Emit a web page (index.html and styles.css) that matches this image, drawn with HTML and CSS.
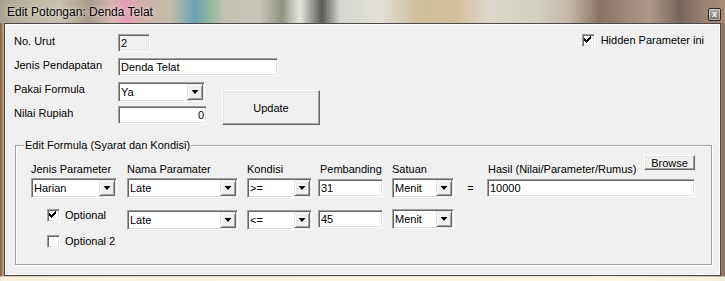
FILE: index.html
```html
<!DOCTYPE html>
<html lang="id">
<head>
    <meta charset="UTF-8">
    <title>Edit Potongan: Denda Telat</title>
    <link rel="stylesheet" href="styles.css">
</head>
<body>
    <div class="desktop">
        <div class="titlebar">
            <span class="title">Edit Potongan: Denda Telat</span>
            <span class="close">x</span>
        </div>

        <div class="client">
            <div class="top">
                <div class="form">
                    <div class="row">
                        <span class="lbl">No. Urut</span>
                        <div class="edit readonly w-urut">2</div>
                    </div>
                    <div class="row">
                        <span class="lbl">Jenis Pendapatan</span>
                        <div class="edit w-jenis">Denda Telat</div>
                    </div>
                    <div class="pair">
                        <div>
                            <div class="row">
                                <span class="lbl">Pakai Formula</span>
                                <div class="combo w-pakai"><span class="val">Ya</span><span class="arrow"></span></div>
                            </div>
                            <div class="row">
                                <span class="lbl">Nilai Rupiah</span>
                                <div class="edit num w-nilai">0</div>
                            </div>
                        </div>
                        <button class="btn update">Update</button>
                    </div>
                </div>

                <div class="check hidden-param">
                    <span class="box">
                        <svg width="11" height="11" viewBox="0 0 11 11" shape-rendering="crispEdges"><path d="M1 3h1v3H1zM2 4h1v3H2zM3 5h1v3H3zM4 4h1v3H4zM5 3h1v3H5zM6 2h1v3H6zM7 1h1v3H7z" fill="#000"/></svg>
                    </span>
                    Hidden Parameter ini
                </div>
            </div>

            <fieldset class="group">
                <legend>Edit Formula (Syarat dan Kondisi)</legend>
                <div class="formula">
                    <div class="frow hdr">
                        <span>Jenis Parameter</span>
                        <span>Nama Paramater</span>
                        <span>Kondisi</span>
                        <span>Pembanding</span>
                        <span>Satuan</span>
                        <span></span>
                        <div class="hasil">
                            <span>Hasil (Nilai/Parameter/Rumus)</span>
                            <button class="btn browse">Browse</button>
                        </div>
                    </div>

                    <div class="frow line1">
                        <div class="combo w-c1"><span class="val">Harian</span><span class="arrow"></span></div>
                        <div class="combo w-c2"><span class="val">Late</span><span class="arrow"></span></div>
                        <div class="combo w-c3"><span class="val">&gt;=</span><span class="arrow"></span></div>
                        <div class="edit w-c4 lift">31</div>
                        <div class="combo w-c5"><span class="val">Menit</span><span class="arrow"></span></div>
                        <span class="eq">=</span>
                        <div class="edit w-c7 lift">10000</div>
                    </div>

                    <div class="frow line2">
                        <div class="check opt">
                            <span class="box">
                                <svg width="11" height="11" viewBox="0 0 11 11" shape-rendering="crispEdges"><path d="M1 3h1v3H1zM2 4h1v3H2zM3 5h1v3H3zM4 4h1v3H4zM5 3h1v3H5zM6 2h1v3H6zM7 1h1v3H7z" fill="#000"/></svg>
                            </span>
                            Optional
                        </div>
                        <div class="combo w-c2"><span class="val">Late</span><span class="arrow"></span></div>
                        <div class="combo w-c3"><span class="val">&lt;=</span><span class="arrow"></span></div>
                        <div class="edit w-c4">45</div>
                        <div class="combo w-c5 up"><span class="val">Menit</span><span class="arrow"></span></div>
                    </div>

                    <div class="frow line3">
                        <div class="check opt">
                            <span class="box"></span>
                            Optional 2
                        </div>
                    </div>
                </div>
            </fieldset>
        </div>
    </div>
</body>
</html>
```

FILE: styles.css
```css
:root {
    --face: #f0f0f0;
    --light: #e3e3e3;
    --shadow: #a0a0a0;
    --dark: #696969;
}

* {
    margin: 0;
    padding: 0;
    box-sizing: border-box;
}

body {
    width: 725px;
    height: 281px;
    overflow: hidden;
    font-family: "Liberation Sans", Arial, sans-serif;
    font-size: 11px;
    color: #000;
}

/* blurred aero backdrop behind the window */
.desktop {
    height: 281px;
    background:
        linear-gradient(180deg, transparent 0, transparent 276px, rgba(255, 251, 230, 0.9) 277px),
        linear-gradient(90deg, #7d5c42 0, #b89878 3px, #c9b79c 20%, #d8ccb4 55%, #ead9c0 85%, #b49480 97%, #8a7060 100%);
}

.titlebar {
    height: 23px;
    display: flex;
    align-items: flex-start;
    padding: 5px 4px 0 7px;
    background: linear-gradient(90deg,
        #a9a28e 0, #bdb6a2 30px, #c7bfaa 60px, #a89c88 90px, #d6b4b2 112px, #e49cb4 125px, #cfb0a8 145px,
        #c4bca6 170px, #6aa4b4 195px, #8cb49c 208px, #c6c2b4 225px, #c8c6bc 260px, #8e9282 282px,
        #e6e6de 300px, #5a5a58 322px, #d6d6ce 340px, #e2e0d6 380px, #cfbc98 420px, #d4bf9c 455px,
        #ddd8cc 490px, #d2cec2 540px, #c4b8a4 570px, #8c7262 600px, #a08676 625px, #b09888 650px,
        #786458 680px, #9c8474 705px, #a88a76 725px);
}

.title {
    font-size: 12px;
    line-height: 15px;
    text-shadow: 0 0 6px rgba(255, 255, 255, 0.7), 0 0 2px rgba(255, 255, 255, 0.5);
}

.close {
    margin: 3px 0 0 auto;
    width: 13px;
    height: 13px;
    border: 1px solid #2a2a2a;
    border-radius: 2px;
    background: linear-gradient(180deg, #b0aaa4, #7a7470);
    box-shadow: inset 0 0 0 1px rgba(255, 255, 255, 0.45);
    color: #fff;
    font-size: 9px;
    font-weight: bold;
    line-height: 10px;
    text-align: center;
}

.client {
    margin-left: 4px;
    width: 717px;
    height: 253px;
    border: 1px solid #4a4a4a;
    box-shadow: inset 1px 1px 0 #fff, inset -1px -1px 0 #fff;
    background: var(--face);
    padding: 10px 16px 0 9px;
}

.top {
    display: flex;
    align-items: flex-start;
}

.row {
    display: flex;
    align-items: flex-start;
    height: 24px;
}

.lbl {
    width: 104px;
    line-height: 14px;
}

.pair {
    display: flex;
    align-items: flex-start;
}

/* sunken edit box */
.edit,
.combo {
    height: 18px;
    border: 1px solid;
    border-color: var(--shadow) #fff #fff var(--shadow);
    box-shadow: inset 1px 1px 0 var(--dark), inset -1px -1px 0 var(--light);
    background: #fff;
    white-space: nowrap;
    overflow: hidden;
}

.edit {
    padding: 0 2px;
    line-height: 16px;
}

.edit.readonly {
    background: var(--face);
}

.edit.num {
    text-align: right;
}

.edit.lift {
    margin-top: 1px;
}

.combo {
    display: flex;
    height: 20px;
    padding: 1px;
}

.combo .val {
    flex: 1;
    padding-left: 1px;
    line-height: 16px;
}

.combo.up {
    margin-top: -1px;
}

.arrow {
    width: 16px;
    height: 16px;
    display: flex;
    align-items: center;
    justify-content: center;
    background: var(--face);
    border: 1px solid;
    border-color: var(--light) var(--dark) var(--dark) var(--light);
    box-shadow: inset 1px 1px 0 #fff, inset -1px -1px 0 var(--shadow);
}

.arrow::before {
    content: "";
    width: 7px;
    height: 4px;
    background: #000;
    clip-path: polygon(0 0, 100% 0, 50% 100%);
}

.w-urut { width: 32px; }
.w-jenis { width: 160px; }
.w-pakai { width: 87px; }
.w-nilai { width: 89px; }

.btn {
    font: inherit;
    color: #000;
    background: var(--face);
    border: 1px solid;
    border-color: #fff var(--dark) var(--dark) #fff;
    box-shadow: inset -1px -1px 0 var(--shadow), inset 1px 1px 0 var(--light);
}

.update {
    width: 98px;
    height: 35px;
    margin: 8px 0 0 15px;
}

.check {
    display: flex;
    align-items: center;
    gap: 6px;
    line-height: 13px;
}

.box {
    width: 13px;
    height: 13px;
    border: 1px solid;
    border-color: var(--shadow) #fff #fff var(--shadow);
    box-shadow: inset 1px 1px 0 var(--dark), inset -1px -1px 0 var(--light);
    background: #fff;
}

.box svg {
    display: block;
}

.hidden-param {
    margin-left: auto;
}

/* group box */
.group {
    margin: 8px 0 0 1px;
    width: 697px;
    border: 1px solid var(--shadow);
    box-shadow: 1px 1px 0 #fff, inset 1px 1px 0 #fff;
    padding: 3px 0 16px 0;
}

.group legend {
    margin-left: 8px;
    padding: 0 1px;
    line-height: 14px;
}

.formula {
    margin-left: 15px;
}

.frow {
    display: grid;
    grid-template-columns: 96px 120px 71px 74px 62px 33px 208px;
    align-items: start;
}

.hdr {
    height: 21px;
    align-items: end;
    line-height: 14px;
}

.hdr > span:nth-child(4) {
    padding-left: 2px;
}

.hasil {
    display: flex;
    justify-content: space-between;
    align-items: flex-end;
    height: 21px;
    padding-left: 1px;
}

.browse {
    align-self: flex-start;
    width: 51px;
    height: 15px;
    line-height: 12px;
}

.line1 {
    margin-top: 2px;
}

.line2 {
    margin-top: 12px;
}

.line3 {
    margin-top: 5px;
}

.w-c1 { width: 86px; }
.w-c2 { width: 111px; }
.w-c3 { width: 65px; }
.w-c4 { width: 65px; }
.w-c5 { width: 62px; }
.w-c7 { width: 208px; }

.eq {
    text-align: center;
    line-height: 20px;
}

.opt {
    padding-left: 16px;
    gap: 5px;
}

.line2 .opt {
    margin-top: -1px;
}
```
